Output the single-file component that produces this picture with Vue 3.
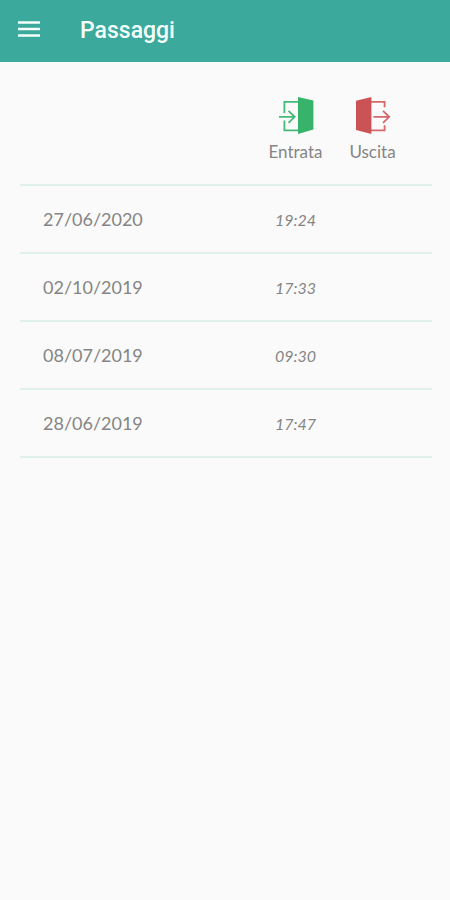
<script setup>
const passages = [
  { date: '27/06/2020', entry: '19:24', exit: '' },
  { date: '02/10/2019', entry: '17:33', exit: '' },
  { date: '08/07/2019', entry: '09:30', exit: '' },
  { date: '28/06/2019', entry: '17:47', exit: '' },
]
</script>

<template>
  <header class="bar">
    <button class="menu" type="button" aria-label="Menu">
      <svg width="22" height="16" viewBox="0 0 22 16" aria-hidden="true">
        <path d="M0 1.5H22M0 8H22M0 14.5H22" stroke="#f4fffc" stroke-width="2.4" />
      </svg>
    </button>
    <h1 class="title">Passaggi</h1>
  </header>
  <main class="content">
    <table class="passages">
      <thead>
        <tr>
          <td></td>
          <th class="slot" scope="col">
            <svg class="door" width="36" height="40" viewBox="0 0 36 40" aria-hidden="true">
              <g fill="none" stroke="#45ba78" stroke-width="1.8">
                <path d="M20 5.8H6.4V17M6.4 24.5V34.4H20" />
                <path d="M1 20.8H16.5M10.5 14.8L16.7 20.8L10.5 26.8" />
              </g>
              <path d="M20 1L35.4 4.6V33.6L20 38Z" fill="#37b36c" />
            </svg>
            <span class="label">Entrata</span>
          </th>
          <th class="slot" scope="col">
            <svg class="door" width="36" height="40" viewBox="0 0 36 40" aria-hidden="true">
              <g fill="none" stroke="#d4686a" stroke-width="1.8">
                <path d="M16 5.8H29.6V11.2M29.6 29.2V34.4H16" />
                <path d="M18.5 20.8H34M28 14.8L34.2 20.8L28 26.8" />
              </g>
              <path d="M16.4 1L1 4.8V34L16.4 38Z" fill="#cb5355" />
            </svg>
            <span class="label">Uscita</span>
          </th>
          <td class="edge"></td>
        </tr>
      </thead>
      <tbody>
        <tr v-for="row in passages" :key="row.date">
          <th class="date" scope="row">{{ row.date }}</th>
          <td class="time">{{ row.entry }}</td>
          <td class="time">{{ row.exit }}</td>
          <td></td>
        </tr>
      </tbody>
    </table>
  </main>
</template>

<style>
body {
  margin: 0;
  background: #fafafa;
}
</style>

<style scoped>
.bar {
  display: flex;
  align-items: center;
  gap: 40px;
  height: 62px;
  padding: 0 18px;
  box-sizing: border-box;
  background: #3ba99c;
}
.menu {
  display: flex;
  padding: 0 0 4px;
  border: 0;
  background: none;
}
.title {
  margin: 0;
  font: 500 23px/28px Roboto, sans-serif;
  color: #f4fffc;
}
.content {
  padding: 0 18px 0 20px;
  font-family: Lato, sans-serif;
  color: #858585;
}
.passages {
  width: 100%;
  table-layout: fixed;
  border-collapse: separate;
  border-spacing: 0;
}
th,
td {
  padding: 0;
  font-weight: 400;
  border-bottom: 2px solid #e0f0ec;
}
thead tr {
  height: 124px;
}
.slot {
  width: 77px;
  padding-top: 12px;
  text-align: center;
}
.edge {
  width: 21px;
}
.door {
  display: block;
  margin: 0 auto 6px;
}
.label {
  font-size: 17px;
  line-height: 20px;
}
tbody tr {
  height: 68px;
}
.date {
  padding-left: 23px;
  text-align: left;
  font-size: 18px;
}
.time {
  text-align: center;
  font-size: 16px;
  font-style: italic;
}
</style>
